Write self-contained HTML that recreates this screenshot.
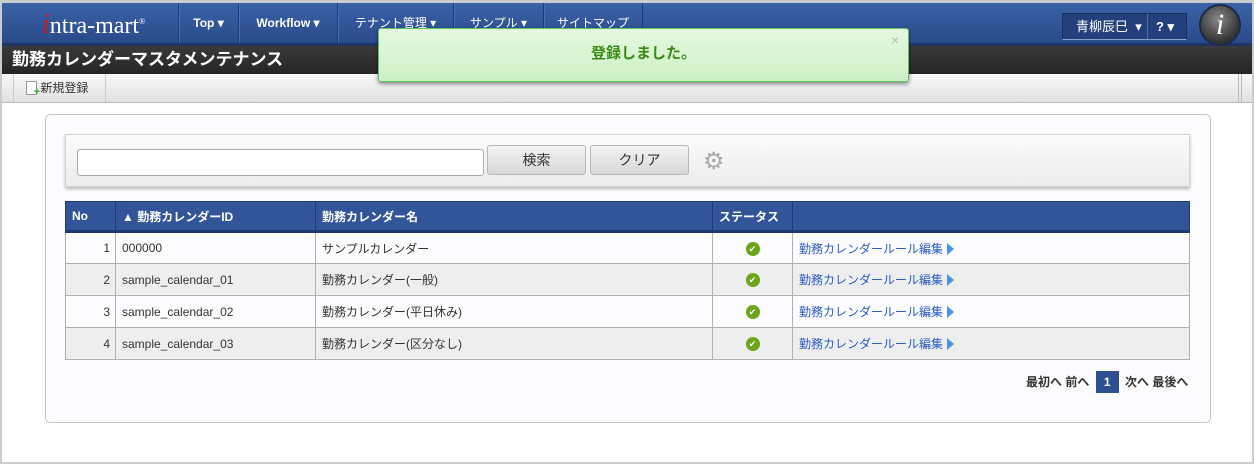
<!DOCTYPE html>
<html><head><meta charset="utf-8"><style>
*{box-sizing:border-box;margin:0;padding:0}
body{width:1254px;height:464px;overflow:hidden;background:#fff;font-family:"Liberation Sans","Noto Sans CJK JP",sans-serif;font-size:12px;color:#333;position:relative;border:2px solid #ccc;border-top:3px solid #ccc}
.abs{position:absolute}
#nav{left:0;top:0;width:1250px;height:43px;background:linear-gradient(#3a62a8,#2a4a8a);border-bottom:3px solid #1f3563}
.ni{position:absolute;top:0;height:40px;line-height:40px;color:#fff;font-weight:bold;font-size:12px;text-align:center;border-left:1px solid #1d3a72;box-shadow:inset 1px 0 #4a70b4}
#title{left:0;top:43px;width:1250px;height:28px;background:linear-gradient(#3a3a3a,#252525);color:#fff;font-weight:bold;font-size:17px;line-height:28px;padding-left:10px}
#tool{left:0;top:71px;width:1250px;height:29px;background:linear-gradient(#f8f8f8,#e2e2e2);border-bottom:1px solid #bbb}
#panel{left:43px;top:111px;width:1166px;height:309px;border:1px solid #c4c4c4;border-radius:5px;background:#fcfcff}
#search{left:63px;top:131px;width:1125px;height:53px;background:linear-gradient(#fbfbfb,#ececec);border:1px solid #d3d3d3;box-shadow:0 2px 3px #bbb}
.btn{position:absolute;top:10px;height:30px;border:1px solid #b8b8b8;border-radius:3px;background:linear-gradient(#f4f4f4,#d8d8d8);font-size:14px;text-align:center;line-height:28px;color:#333}
table{position:absolute;left:63px;top:198px;width:1125px;border-collapse:collapse}
th{background:#32559a;color:#fff;font-weight:bold;text-align:left;height:30px;padding-left:6px;border:1px solid #1f3a70;border-bottom:3px solid #1f3a70;font-size:12px}
td{height:32px;border:1px solid #b0b0b0;padding-left:6px;font-size:12px;color:#333}
tr.g td{background:#eee}
.chk{display:inline-block;width:14px;height:14px;border-radius:50%;background:#6aa51b;color:#fff;font-size:9px;line-height:14px;text-align:center}
a{color:#2a5bc4;text-decoration:none}
.tri{display:inline-block;width:0;height:0;border-left:7px solid #4a95e0;border-top:6px solid transparent;border-bottom:6px solid transparent;vertical-align:-2px;margin-left:4px}
</style></head><body>
<div id="nav" class="abs">
 <div class="abs" style="left:40px;top:6px;font-family:'Liberation Serif',serif;font-size:24px;color:#fff"><span style="color:#d01818;font-style:italic;font-size:28px">i</span>ntra-mart<sup style="font-size:8px">®</sup></div>
 <div class="ni" style="left:176px;width:60px">Top ▾</div>
 <div class="ni" style="left:236px;width:99px">Workflow ▾</div>
 <div class="ni" style="left:335px;width:116px;font-weight:normal">テナント管理 ▾</div>
 <div class="ni" style="left:451px;width:90px;font-weight:normal">サンプル ▾</div>
 <div class="ni" style="left:541px;width:100px;font-weight:normal;border-right:1px solid #1d3a72">サイトマップ</div>
 <div class="abs" style="left:1060px;top:10px;width:125px;height:27px;border:1px solid #1a3060;border-bottom:1px solid #8aa0cc;background:#23407c;color:#fff;font-size:13px;line-height:25px">
  <span style="padding-left:13px">青柳辰巳 &nbsp;▾</span><span style="position:absolute;left:84px;top:0;height:25px;border-left:1px solid #5570a8;padding-left:8px;font-weight:bold">? ▾</span></div>
 <div class="abs" style="left:1197px;top:1px;width:42px;height:42px;border-radius:50%;background:radial-gradient(circle at 45% 35%,#888,#333 70%);border:2px solid #1a2a4a;color:#fff;font-family:'Liberation Serif',serif;font-style:italic;font-size:30px;text-align:center;line-height:38px">i</div>
</div>
<div id="title" class="abs">勤務カレンダーマスタメンテナンス</div>
<div id="tool" class="abs"><div class="abs" style="left:11px;top:0;width:93px;height:28px;border-left:1px solid #ccc;border-right:1px solid #ccc;line-height:28px;padding-left:12px;font-size:12px">
 <span style="display:inline-block;width:11px;height:14px;border:1px solid #999;background:#fff;vertical-align:-3px;position:relative"><span style="position:absolute;right:-4px;bottom:-3px;color:#3a3;font-weight:bold;font-size:11px;line-height:9px">+</span></span> 新規登録</div>
 <div class="abs" style="left:1236px;top:0;height:28px;border-left:1px solid #bbb;width:4px;border-right:1px solid #bbb"></div></div>
<div id="panel" class="abs"></div>
<div id="search" class="abs">
 <div class="abs" style="left:11px;top:14px;width:407px;height:27px;border:1px solid #aaa;border-radius:3px;background:#fff"></div>
 <div class="btn" style="left:421px;width:99px">検索</div>
 <div class="btn" style="left:524px;width:99px">クリア</div>
 <div class="abs" style="left:637px;top:15px;font-size:24px;color:#aaa;line-height:24px">⚙</div>
</div>
<table>
<tr><th style="width:50px">No</th><th style="width:200px">▲ 勤務カレンダーID</th><th style="width:397px">勤務カレンダー名</th><th style="width:80px">ステータス</th><th></th></tr>
<tr><td style="text-align:right;padding-right:5px">1</td><td>000000</td><td>サンプルカレンダー</td><td style="text-align:center;padding:0"><span class="chk">✔</span></td><td><a>勤務カレンダールール編集</a><span class="tri"></span></td></tr>
<tr class="g"><td style="text-align:right;padding-right:5px">2</td><td>sample_calendar_01</td><td>勤務カレンダー(一般)</td><td style="text-align:center;padding:0"><span class="chk">✔</span></td><td><a>勤務カレンダールール編集</a><span class="tri"></span></td></tr>
<tr><td style="text-align:right;padding-right:5px">3</td><td>sample_calendar_02</td><td>勤務カレンダー(平日休み)</td><td style="text-align:center;padding:0"><span class="chk">✔</span></td><td><a>勤務カレンダールール編集</a><span class="tri"></span></td></tr>
<tr class="g"><td style="text-align:right;padding-right:5px">4</td><td>sample_calendar_03</td><td>勤務カレンダー(区分なし)</td><td style="text-align:center;padding:0"><span class="chk">✔</span></td><td><a>勤務カレンダールール編集</a><span class="tri"></span></td></tr>
</table>
<div class="abs" style="left:1024px;top:368px;font-weight:bold;font-size:12px;line-height:22px;color:#333">最初へ 前へ <span style="display:inline-block;width:23px;height:22px;background:#2e5092;color:#fff;text-align:center;margin:0 3px">1</span> 次へ 最後へ</div>
<div class="abs" style="left:376px;top:25px;width:531px;height:54px;border:1px solid #5ec45e;border-radius:3px;background:linear-gradient(#e4f8e0,#cdf0c6);box-shadow:0 2px 4px rgba(0,0,0,.45);color:#3a8a12;font-weight:bold;font-size:15px;text-align:center;line-height:50px">登録しました。<span style="position:absolute;right:9px;top:-14px;color:#bbb;font-size:14px;font-weight:normal">×</span></div>
</body></html>
